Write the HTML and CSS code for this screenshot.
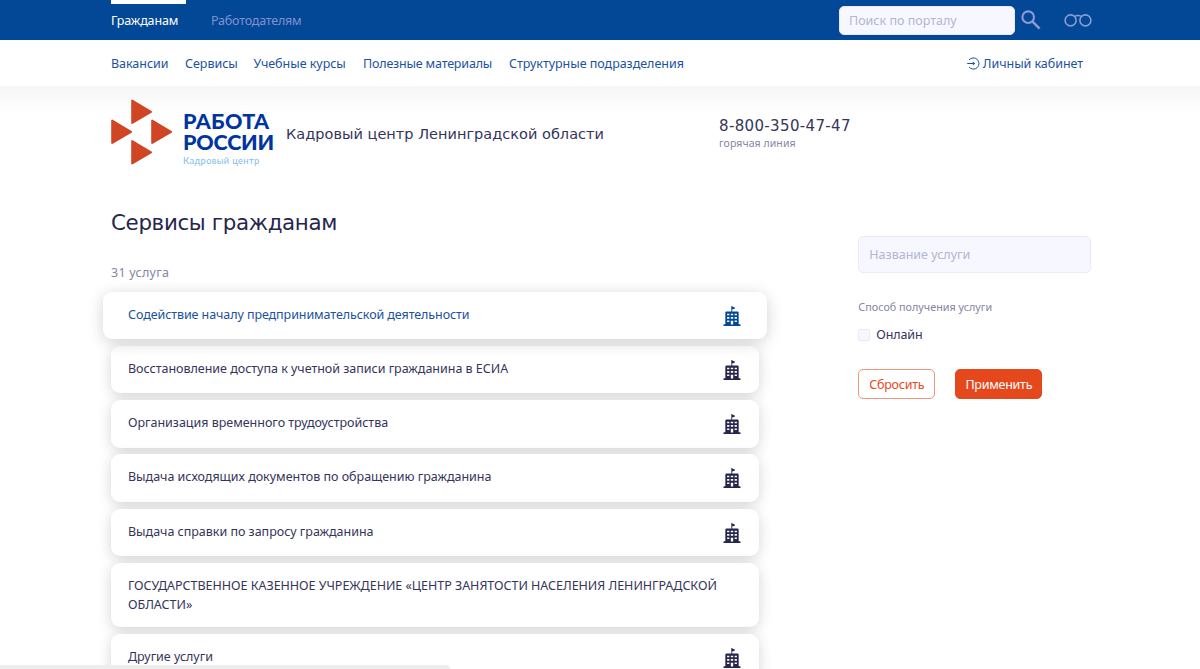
FILE: index.html
```
<!DOCTYPE html>
<html lang="ru">
<head>
    <meta charset="UTF-8">
    <meta name="viewport" content="width=device-width, initial-scale=1.0">
    <title>Сервисы гражданам</title>
    <link rel="stylesheet" href="styles.css">
</head>
<body>
    <!-- building icon, shared by the service cards -->
    <svg class="sprite" width="0" height="0">
        <symbol id="building" viewBox="0 0 18 21">
            <path fill-rule="evenodd" d="M8.3 0h.9v.6l2.6.9v1.2l-2.6.9v2H14.6q1.2 0 1.2 1.2V18.7h1.3q.6 0 .6.6v1.1H.3v-1.1q0-.6.6-.6h1.3V6.8q0-1.2 1.2-1.2h4.9zM4 7.9v1.6h2.3V7.9zM7.8 7.9v1.6h2.4V7.9zM11.7 7.9v1.6h2.3V7.9zM4 11.3v1.6h2.3v-1.6zM7.8 11.3v1.6h2.4v-1.6zM11.7 11.3v1.6h2.3v-1.6zM4 14.7v1.6h2.3v-1.6zM11.7 14.7v1.6h2.3v-1.6zM7.8 15v3.9h2.4V15z"/>
        </symbol>
    </svg>

    <header class="topbar">
        <div class="container topbar-inner">
            <a class="tab active" href="#">Гражданам</a>
            <a class="tab" href="#">Работодателям</a>
            <input class="search" type="text" placeholder="Поиск по порталу">
            <svg class="search-icon" width="20" height="20" viewBox="0 0 20 20">
                <circle cx="7.2" cy="7.2" r="5.8" fill="none" stroke="currentColor" stroke-width="2.1"/>
                <path d="M11.6 11.6L18.6 18.6" stroke="currentColor" stroke-width="2.6"/>
            </svg>
            <svg class="glasses-icon" width="28" height="14" viewBox="0 0 28 14" fill="none" stroke="currentColor" stroke-width="1.6">
                <circle cx="6.6" cy="7.4" r="5.5"/>
                <circle cx="21.4" cy="7.4" r="5.5"/>
                <path d="M10.4 3.4Q14 1.6 17.6 3.4"/>
            </svg>
        </div>
    </header>

    <nav class="menu">
        <div class="container menu-inner">
            <div class="links">
                <a href="#">Вакансии</a>
                <a href="#">Сервисы</a>
                <a href="#">Учебные курсы</a>
                <a class="tight" href="#">Полезные материалы</a>
                <a href="#">Структурные подразделения</a>
            </div>
            <a class="login" href="#">
                <svg width="13" height="13" viewBox="0 0 13 13" fill="none" stroke="currentColor">
                    <path d="M2 3A5.6 5.6 0 1 1 2 10M.2 6.5H7.2"/>
                    <path d="M5.8 4.4L8.2 6.5L5.8 8.6z" fill="currentColor" stroke="none"/>
                </svg>
                Личный кабинет
            </a>
        </div>
    </nav>

    <div class="brand">
        <div class="container brand-inner">
            <svg class="logo" width="62" height="66" viewBox="0 0 62 66" fill="#d04524" stroke="#d04524" stroke-width="2" stroke-linejoin="round">
                <path d="M21.2 1.5V24L40 12.8zM1.2 21.5V44L20 32.8zM41.2 21.5V44L60 32.8zM21.2 42V64.5L40 53.3z"/>
            </svg>
            <div class="logo-text">
                <b>РАБОТА</b>
                <b class="second">РОССИИ</b>
                <span>Кадровый центр</span>
            </div>
            <div class="brand-name">Кадровый центр Ленинградской области</div>
            <div class="hotline">
                <div class="phone">8-800-350-47-47</div>
                <div class="hint">горячая линия</div>
            </div>
        </div>
    </div>

    <main class="container content">
        <section class="services">
            <h1>Сервисы гражданам</h1>
            <p class="count">31 услуга</p>
            <a class="card hover" href="#"><span>Содействие началу предпринимательской деятельности</span><svg><use href="#building"/></svg></a>
            <a class="card" href="#"><span>Восстановление доступа к учетной записи гражданина в ЕСИА</span><svg><use href="#building"/></svg></a>
            <a class="card" href="#"><span>Организация временного трудоустройства</span><svg><use href="#building"/></svg></a>
            <a class="card" href="#"><span>Выдача исходящих документов по обращению гражданина</span><svg><use href="#building"/></svg></a>
            <a class="card" href="#"><span>Выдача справки по запросу гражданина</span><svg><use href="#building"/></svg></a>
            <a class="card" href="#"><span>ГОСУДАРСТВЕННОЕ КАЗЕННОЕ УЧРЕЖДЕНИЕ «ЦЕНТР ЗАНЯТОСТИ НАСЕЛЕНИЯ ЛЕНИНГРАДСКОЙ ОБЛАСТИ»</span></a>
            <a class="card" href="#"><span>Другие услуги</span><svg><use href="#building"/></svg></a>
        </section>

        <aside class="filter">
            <input class="name" type="text" placeholder="Название услуги">
            <p class="label">Способ получения услуги</p>
            <label class="check"><input type="checkbox">Онлайн</label>
            <div class="buttons">
                <button class="reset">Сбросить</button>
                <button class="apply">Применить</button>
            </div>
        </aside>
    </main>

    <div class="statusbar"></div>
</body>
</html>
```
FILE: styles.css
```
* { box-sizing: border-box; }
html, body { height: 100%; }
body { margin: 0; overflow: hidden; background: #fff; color: #35355a; font-family: "Noto Sans", sans-serif; font-size: 12.5px; }
a { color: inherit; text-decoration: none; }
input, button { font-family: inherit; font-size: 12.5px; }
input::placeholder { color: #b2b5d3; opacity: 1; }
.sprite { display: block; height: 0; }
.container { width: 981px; margin-left: 111px; }

.topbar { height: 40px; background: #034896; }
.topbar-inner { display: flex; align-items: center; height: 40px; }
.tab { height: 40px; line-height: 33px; border-top: 4px solid transparent; letter-spacing: -0.2px; color: #8290cc; margin-right: 25px; }
.tab.active { width: 75px; color: #fff; border-color: #fff; letter-spacing: -0.15px; }
.search { width: 176px; height: 29px; margin-left: auto; padding: 0 9px; border: 1px solid #e8e9f6; border-radius: 5px; background: #f7f7ff; }
.search-icon { margin-left: 6px; color: #8c9bd3; }
.glasses-icon { margin-left: 23px; color: #8c9bd3; }

.menu { height: 46px; color: #1b529f; }
.menu-inner { display: flex; align-items: center; justify-content: space-between; height: 47px; }
.links { display: grid; grid-template-columns: 74px 68.5px 109.5px 146px auto; white-space: nowrap; letter-spacing: -0.03px; }
.links .tight { letter-spacing: -0.18px; }
.login { display: flex; align-items: center; gap: 3px; margin-right: 9px; letter-spacing: -0.05px; }

.brand { height: 114px; background: linear-gradient(#f6f6f6, #fff 28px); }
.brand-inner { display: flex; padding-top: 13px; }
.logo-text { display: flex; flex-direction: column; width: 104px; margin-left: 9px; padding: 12px 0 0 1px; font-family: Lato, sans-serif; color: #0035a0; }
.logo-text b { font-size: 21.5px; line-height: 21px; font-weight: 900; letter-spacing: 0.3px; }
.logo-text .second { letter-spacing: -0.2px; }
.logo-text span { margin-top: 2px; font-size: 9.3px; line-height: 12px; letter-spacing: 0.35px; color: #7fbdec; }
.brand-name { width: 433px; padding-top: 24px; font-family: "DejaVu Sans", sans-serif; font-size: 14.5px; line-height: 22px; letter-spacing: 0.02px; }
.phone { padding-top: 16px; font-family: "DejaVu Sans", sans-serif; font-size: 15px; line-height: 22px; letter-spacing: 0.35px; }
.hint { margin-top: -1px; font-size: 10.5px; line-height: 14px; letter-spacing: 0.08px; color: #8586a5; }

.content { display: flex; }
.services { width: 648px; }
h1 { margin: 6px 0 0; font-family: "DejaVu Sans", sans-serif; font-size: 21.4px; line-height: 34px; font-weight: 400; letter-spacing: -0.35px; color: #26264c; }
.count { margin: 23px 0 9.6px; line-height: 19px; letter-spacing: 0.25px; color: #8586a5; }
.card { display: flex; justify-content: space-between; align-items: flex-start; margin-bottom: 6.7px; padding: 14px 18px 13px 17px; border-radius: 9px; background: #fff; box-shadow: 0 3px 14px rgba(0, 0, 0, 0.17); line-height: 18.5px; letter-spacing: -0.02px; }
.card span { flex: 1; }
.card svg { flex: none; width: 18px; height: 20.6px; fill: #26264c; }
.card.hover { position: relative; margin: 0 -8px 6.7px; padding: 14px 26px 13px 25px; color: #1b529f; box-shadow: 0 3px 16px rgba(0, 0, 0, 0.18); letter-spacing: -0.08px; }
.card.hover svg { fill: #034896; }

.filter { width: 233px; margin: 36px 0 0 99.3px; }
.name { display: block; width: 233px; height: 37px; padding: 0 10px; border: 1px solid #ebebf5; border-radius: 5px; background: #f7f7ff; }
.label { margin: 26px 0 0; font-size: 10.8px; line-height: 16px; color: #8586a5; }
.check { display: flex; align-items: center; gap: 6px; margin-top: 10px; line-height: 19px; letter-spacing: -0.1px; }
.check input { appearance: none; width: 12px; height: 12px; margin: 0; border: 1px solid #ebebf5; border-radius: 2px; background: #f7f7ff; }
.buttons { display: flex; gap: 20px; margin-top: 25.4px; }
.buttons button { height: 30px; padding: 0; border: 1px solid #e6481e; border-radius: 5px; letter-spacing: -0.25px; }
.reset { width: 77px; color: #e6481e; background: #fff; }
.buttons .reset { border-color: #f3957e; }
.apply { width: 87px; color: #fff; background: #e6481e; }

.statusbar { position: fixed; left: 0; bottom: 0; width: 450px; height: 4px; border-top-right-radius: 4px; background: #ededed; }
```
